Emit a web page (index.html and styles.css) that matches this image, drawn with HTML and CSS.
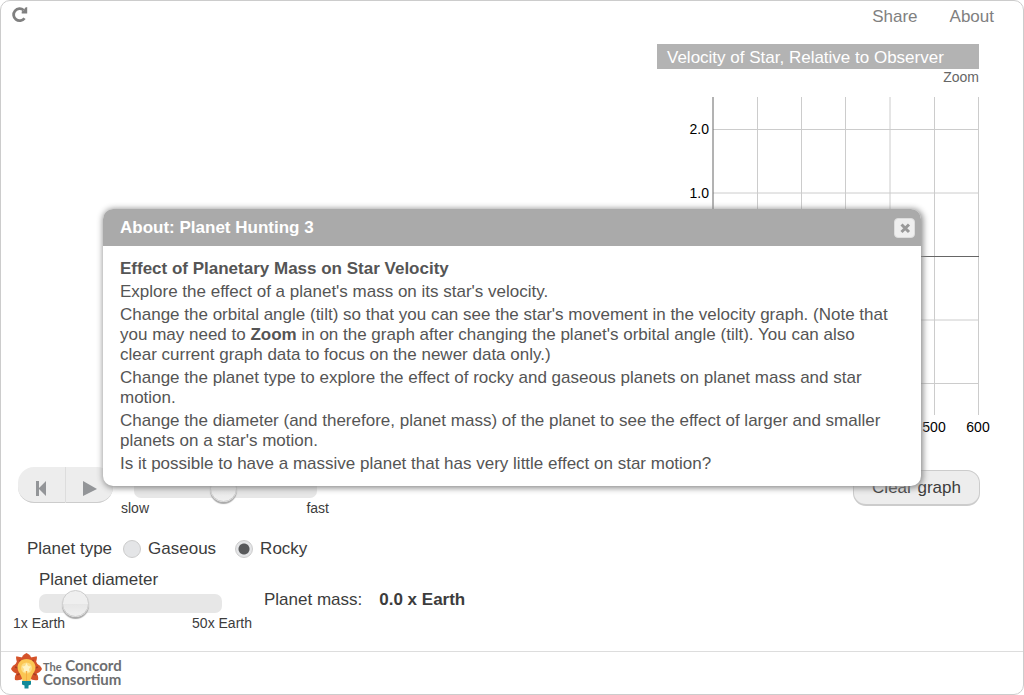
FILE: index.html
```html
<!DOCTYPE html>
<html lang="en">
<head>
<meta charset="utf-8">
<title>Planet Hunting 3</title>
<link rel="stylesheet" href="styles.css">
</head>
<body>
<div class="shell">
  <header class="topbar">
    <button class="reload" type="button" aria-label="Reload">
      <svg width="17" height="17" viewBox="0 0 17 17"><path d="M13.500 12.200A6 6 0 1 1 12.700 4.300" fill="none" stroke="#808080" stroke-width="2.800"/><path d="M16.200 1V7.500H10.700V5.500L12.500 4.500L13.500 3L14 1.800Z" fill="#808080"/></svg>
    </button>
    <nav class="links">
      <a href="#share">Share</a>
      <a href="#about">About</a>
    </nav>
  </header>

  <main class="lab">
    <section class="stage">
      <div class="graph">
        <h2 class="graph-title">Velocity of Star, Relative to Observer</h2>
        <div class="graph-zoom">Zoom</div>
        <svg class="plot" width="336" height="340" viewBox="0 0 336 340">
          <path class="grid" d="M100.500 0V318M144.500 0V318M188.500 0V318M233 0V318M277.500 0V318M321.500 0V318M56 32.500H322M56 96H322M56 223H322M56 286.500H322"/>
          <path class="axis" d="M56 0V318M56 159.500H322"/>
          <g class="ylabels">
            <text x="52" y="37">2.0</text>
            <text x="52" y="101">1.0</text>
          </g>
          <g class="xlabels">
            <text x="277" y="335">500</text>
            <text x="321" y="335">600</text>
          </g>
        </svg>
      </div>
    </section>

    <section class="playback">
      <div class="transport">
        <button type="button" aria-label="Reset"><svg width="12" height="16" viewBox="0 0 12 16"><path d="M0 0H3V7L10 0V15L3 8V15H0Z" fill="#939598"/></svg></button>
        <button type="button" aria-label="Play"><svg width="14" height="16" viewBox="0 0 14 16"><path d="M0 0L14 8L0 15Z" fill="#939598"/></svg></button>
      </div>
      <div class="range speed">
        <input type="range" min="0" max="100" value="49" aria-label="Speed">
        <div class="ends"><span>slow</span><span>fast</span></div>
      </div>
      <button class="clear" type="button">Clear graph</button>
    </section>

    <fieldset class="types">
      <legend class="types-legend">Planet type</legend>
      <label><input type="radio" name="type">Gaseous</label>
      <label><input type="radio" name="type" checked>Rocky</label>
    </fieldset>

    <section class="planet">
      <div class="range diameter">
        <label for="diameter">Planet diameter</label>
        <input id="diameter" type="range" min="0" max="100" value="15">
        <div class="ends"><span>1x Earth</span><span>50x Earth</span></div>
      </div>
      <div class="mass"><span>Planet mass:</span><b>0.0 x Earth</b></div>
    </section>
  </main>

  <footer class="footer">
    <a class="logo" href="#home">
      <svg width="32" height="36" viewBox="0 0 32 36">
        <g fill="#d5532a">
          <path d="M15.500 0Q20 2 20.500 6Q20 12 15.500 14Q11 12 10.500 6Q11 2 15.500 0Z"/>
          <path d="M5 3.500Q10 3 13 6L16 14L8 12Q5 9 5 3.500Z"/>
          <path d="M26 3.500Q21 3 18 6L15 14L23 12Q26 9 26 3.500Z"/>
          <path d="M0 16Q2 11 7 10.500L15 16L7 21Q2 20 0 16Z"/>
          <path d="M31 16Q29 11 24 10.500L16 16L24 21Q29 20 31 16Z"/>
          <path d="M4 27Q3 22 7 19L15 17L13 25Q9 28 4 27Z"/>
          <path d="M27 27Q28 22 24 19L16 17L18 25Q22 28 27 27Z"/>
          <circle cx="15.500" cy="15" r="11.500"/>
        </g>
        <path d="M8.500 7L10.500 10M22.500 7L20.500 10M4 14L7 15M27 14L24 15M6 22L10 20M25 22L21 20" stroke="#a83e24" stroke-width="1.500"/>
        <path d="M15.500 6C9.500 6 6.500 10.300 6.500 14.500C6.500 19 10.500 21 11.500 28H19.500C20.500 21 24.500 19 24.500 14.500C24.500 10.300 21.500 6 15.500 6Z" fill="#fbc653"/>
        <circle cx="15.500" cy="15" r="5.500" fill="#fddd85"/>
        <path d="M15.500 10L17 13L20 13.500L18 16L18.500 19L15.500 18L12.500 19L13 16L11 13.500L14 13Z" fill="#fff3c4"/>
        <path d="M15.500 18V28" stroke="#f7ad43"/>
        <path d="M11 28H20V31.500L17.500 32.500V35.500H13.500V32.500L11 31.500Z" fill="#128a99"/>
      </svg>
      <span class="wordmark"><span><small>The</small> Concord</span><span>Consortium</span></span>
    </a>
  </footer>

  <div class="dialog" role="dialog" aria-labelledby="dialog-title">
    <div class="dialog-bar">
      <h1 id="dialog-title">About: Planet Hunting 3</h1>
      <button class="close" type="button" aria-label="Close"><svg width="12" height="12" viewBox="0 0 12 12"><path d="M2.500 2.500L10 10M10 2.500L2.500 10" stroke="#999" stroke-width="3"/></svg></button>
    </div>
    <div class="dialog-body">
      <p><b>Effect of Planetary Mass on Star Velocity</b></p>
      <p>Explore the effect of a planet's mass on its star's velocity.</p>
      <p>Change the orbital angle (tilt) so that you can see the star's movement in the velocity graph. (Note that you may need to <b>Zoom</b> in on the graph after changing the planet's orbital angle (tilt). You can also clear current graph data to focus on the newer data only.)</p>
      <p>Change the planet type to explore the effect of rocky and gaseous planets on planet mass and star motion.</p>
      <p>Change the diameter (and therefore, planet mass) of the planet to see the effect of larger and smaller planets on a star's motion.</p>
      <p>Is it possible to have a massive planet that has very little effect on star motion?</p>
    </div>
  </div>
</div>
</body>
</html>
```
FILE: styles.css
```css
* { box-sizing: border-box; }
body {
  margin: 0;
  background: #fff;
  color: #3c3c3c;
  font: 17px/20px "Liberation Sans", Arial, sans-serif;
}
button { font: inherit; color: inherit; cursor: pointer; }
a { color: inherit; text-decoration: none; }
h1, h2, p { margin: 0; font-size: inherit; }

.shell {
  position: relative;
  display: flex;
  flex-direction: column;
  min-height: 100vh;
  border: 1px solid #ccc;
  border-radius: 10px;
}

.topbar {
  display: flex;
  justify-content: space-between;
  align-items: flex-start;
  padding: 5px 29px 0 10px;
  color: #808080;
}
.reload { display: flex; padding: 0; border: 0; background: none; }
.links { display: flex; gap: 32px; padding-top: 1px; }
.links a { height: 20px; }

.lab { flex: 1; padding-top: 17px; }

.stage { display: flex; justify-content: flex-end; padding-right: 44px; }
.graph { width: 322px; }
.graph-title {
  padding: 4px 10px 1px;
  background: #b3b3b3;
  color: #fff;
  font-weight: normal;
}
.graph-zoom {
  height: 28px;
  line-height: 16px;
  font-size: 14px;
  text-align: right;
  color: #666;
}
.plot { display: block; overflow: visible; font-size: 14px; }
.grid { fill: none; stroke: #ccc; }
.axis { fill: none; stroke: #666; }
.ylabels { text-anchor: end; fill: #000; }
.xlabels { text-anchor: middle; fill: #000; }

.playback {
  display: flex;
  align-items: flex-start;
  padding: 30px 43px 0 17px;
}
.transport { display: flex; }
.transport button {
  display: flex;
  align-items: center;
  justify-content: center;
  width: 48px;
  height: 36px;
  padding: 8px 0 0;
  border: 0;
  border-bottom: 1px solid #ccc;
  background: #ededed;
}
.transport button:first-child { border-right: 1px solid #ddd; border-radius: 16px 0 0 16px; }
.transport button:last-child { width: 47px; border-radius: 0 16px 16px 0; }

.range { display: flex; flex-direction: column; align-items: center; }
.range input {
  appearance: none;
  width: 183px;
  height: 19px;
  margin: 0;
  border-radius: 7px;
  background: #e7e7e7;
}
.range input::-webkit-slider-thumb {
  appearance: none;
  width: 27px;
  height: 27px;
  border: 1px solid #ccc;
  border-radius: 50%;
  background: linear-gradient(#efefef 50%, #e6e6e6 50%, #f0f0f0);
  box-shadow: 0 2px 1px #aaa;
}
.ends {
  display: flex;
  justify-content: space-between;
  width: 100%;
  font-size: 14px;
}
.speed { width: 208px; margin: 12px auto 0 8px; padding-bottom: 4px; }
.clear {
  width: 127px;
  height: 36px;
  margin-top: 3px;
  padding: 1px 0 0;
  border: 1px solid #ccc;
  border-bottom-width: 2px;
  border-radius: 13px;
  background: #ededed;
}

.types {
  display: flex;
  align-items: center;
  gap: 19px;
  margin: 17px 0 0;
  padding: 0 26px;
  border: 0;
}
.types-legend { float: left; padding: 0; margin-right: -8px; }
.types label { display: flex; align-items: center; gap: 7px; }
.types input {
  appearance: none;
  width: 18px;
  height: 18px;
  margin: 0;
  border: 1px solid #ccc;
  border-radius: 50%;
  background: #e4e5e7;
}
.types input:checked { background: radial-gradient(circle, #58595b 5px, #e4e5e7 6px); }

.planet { display: flex; align-items: center; gap: 12px; padding: 11px 12px 15px; }
.diameter { width: 239px; align-items: flex-start; }
.diameter label { padding: 0 0 4px 26px; }
.diameter input { margin-left: 26px; }
.mass { display: flex; gap: 17px; margin-top: -4px; }

.footer { padding: 1px 10px 5px; border-top: 1px solid #ddd; }
.logo { display: inline-flex; align-items: center; vertical-align: top; color: #6d6e70; }
.wordmark {
  display: flex;
  flex-direction: column;
  padding-top: 1px;
  font: bold 15px/12px Lato, sans-serif;
}
.wordmark small { font-size: 11px; }

.dialog {
  position: absolute;
  top: 208px;
  left: 102px;
  right: 102px;
  border-radius: 10px;
  background: #fff;
  color: #555;
  box-shadow: 1px 1px 6px 1px #888;
}
.dialog-bar {
  display: flex;
  align-items: center;
  justify-content: space-between;
  height: 37px;
  padding: 0 6px 0 17px;
  border-radius: 10px 10px 0 0;
  background: #aaa;
  color: #fff;
}
.close {
  display: flex;
  align-items: center;
  justify-content: center;
  width: 21px;
  height: 20px;
  padding: 0;
  border: 1px solid #ddd;
  border-radius: 4px;
  background: #efefef;
}
.dialog-body {
  display: flex;
  flex-direction: column;
  gap: 3px;
  padding: 13px 29px 12px 17px;
}
```
